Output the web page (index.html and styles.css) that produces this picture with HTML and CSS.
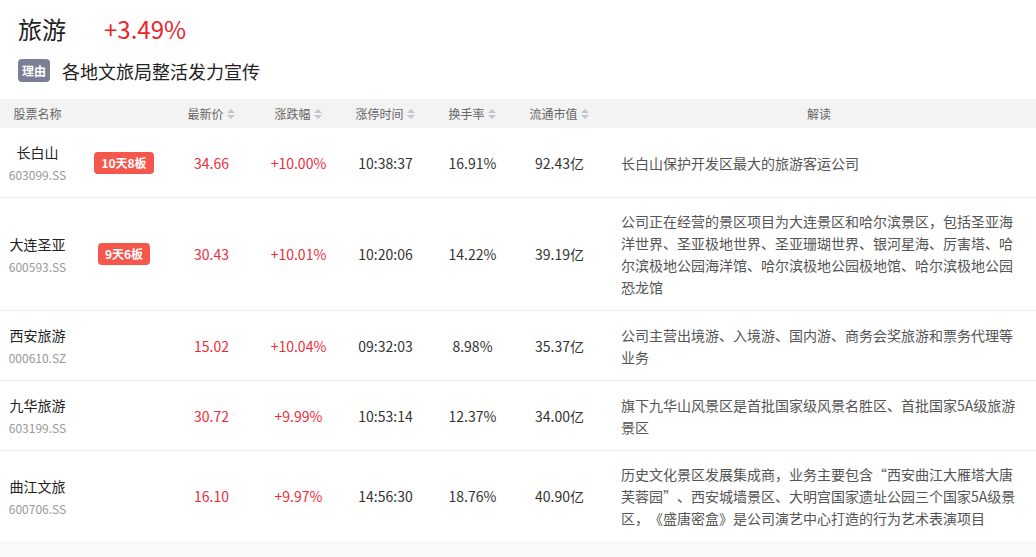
FILE: index.html
```html
<!DOCTYPE html>
<html lang="zh-CN">
<head>
  <meta charset="UTF-8" />
  <title>旅游板块</title>
  <link rel="stylesheet" href="styles.css">
</head>
<body>

  <div class="topic">
    <div class="topic-title">
      <span class="topic-name">旅游</span>
      <span class="topic-rate">+3.49%</span>
    </div>
    <div class="topic-reason">
      <span class="reason-tag">理由</span>
      <span class="reason-text">各地文旅局整活发力宣传</span>
    </div>
  </div>

  <div class="stock-table">
    <div class="row head">
      <div class="cell">股票名称</div>
      <div class="cell"></div>
      <div class="cell">最新价<svg class="sort" viewBox="0 0 10 12"><path d="M5 1 L9 5 L1 5 Z M5 11 L9 7 L1 7 Z"/></svg></div>
      <div class="cell">涨跌幅<svg class="sort" viewBox="0 0 10 12"><path d="M5 1 L9 5 L1 5 Z M5 11 L9 7 L1 7 Z"/></svg></div>
      <div class="cell">涨停时间<svg class="sort" viewBox="0 0 10 12"><path d="M5 1 L9 5 L1 5 Z M5 11 L9 7 L1 7 Z"/></svg></div>
      <div class="cell">换手率<svg class="sort" viewBox="0 0 10 12"><path d="M5 1 L9 5 L1 5 Z M5 11 L9 7 L1 7 Z"/></svg></div>
      <div class="cell">流通市值<svg class="sort" viewBox="0 0 10 12"><path d="M5 1 L9 5 L1 5 Z M5 11 L9 7 L1 7 Z"/></svg></div>
      <div class="cell desc">解读</div>
    </div>

    <div class="row">
      <div class="cell name"><div class="stock-name">长白山</div><div class="stock-code">603099.SS</div></div>
      <div class="cell tagcell"><span class="board-tag">10天8板</span></div>
      <div class="cell up">34.66</div>
      <div class="cell up">+10.00%</div>
      <div class="cell">10:38:37</div>
      <div class="cell">16.91%</div>
      <div class="cell">92.43亿</div>
      <div class="cell desc">长白山保护开发区最大的旅游客运公司</div>
    </div>

    <div class="row">
      <div class="cell name"><div class="stock-name">大连圣亚</div><div class="stock-code">600593.SS</div></div>
      <div class="cell tagcell"><span class="board-tag">9天6板</span></div>
      <div class="cell up">30.43</div>
      <div class="cell up">+10.01%</div>
      <div class="cell">10:20:06</div>
      <div class="cell">14.22%</div>
      <div class="cell">39.19亿</div>
      <div class="cell desc">公司正在经营的景区项目为大连景区和哈尔滨景区，包括圣亚海洋世界、圣亚极地世界、圣亚珊瑚世界、银河星海、厉害塔、哈尔滨极地公园海洋馆、哈尔滨极地公园极地馆、哈尔滨极地公园恐龙馆</div>
    </div>

    <div class="row">
      <div class="cell name"><div class="stock-name">西安旅游</div><div class="stock-code">000610.SZ</div></div>
      <div class="cell tagcell"></div>
      <div class="cell up">15.02</div>
      <div class="cell up">+10.04%</div>
      <div class="cell">09:32:03</div>
      <div class="cell">8.98%</div>
      <div class="cell">35.37亿</div>
      <div class="cell desc">公司主营出境游、入境游、国内游、商务会奖旅游和票务代理等业务</div>
    </div>

    <div class="row">
      <div class="cell name"><div class="stock-name">九华旅游</div><div class="stock-code">603199.SS</div></div>
      <div class="cell tagcell"></div>
      <div class="cell up">30.72</div>
      <div class="cell up">+9.99%</div>
      <div class="cell">10:53:14</div>
      <div class="cell">12.37%</div>
      <div class="cell">34.00亿</div>
      <div class="cell desc">旗下九华山风景区是首批国家级风景名胜区、首批国家5A级旅游景区</div>
    </div>

    <div class="row">
      <div class="cell name"><div class="stock-name">曲江文旅</div><div class="stock-code">600706.SS</div></div>
      <div class="cell tagcell"></div>
      <div class="cell up">16.10</div>
      <div class="cell up">+9.97%</div>
      <div class="cell">14:56:30</div>
      <div class="cell">18.76%</div>
      <div class="cell">40.90亿</div>
      <div class="cell desc">历史文化景区发展集成商，业务主要包含“西安曲江大雁塔大唐芙蓉园”、西安城墙景区、大明宫国家遗址公园三个国家5A级景区，《盛唐密盒》是公司演艺中心打造的行为艺术表演项目</div>
    </div>
  </div>

  <div class="footer"></div>

</body>
</html>
```

FILE: styles.css
```css
* { box-sizing: border-box; }
body {
  margin: 0;
  font-family: "Noto Sans CJK SC", "Noto Sans", sans-serif;
  background: #fff;
  color: #333;
}

.topic {
  padding: 12px 18px 17px;
}

.topic-title {
  display: flex;
  align-items: center;
  gap: 38px;
  height: 32px;
  font-size: 24px;
}

.topic-name {
  color: #222;
}

.topic-rate {
  color: #e8262b;
}

.topic-reason {
  display: flex;
  align-items: center;
  gap: 12px;
  margin-top: 15px;
  height: 23px;
}

.reason-tag {
  background: #7b8098;
  color: #fff;
  font-size: 12px;
  font-weight: bold;
  border-radius: 4px;
  width: 32px;
  height: 23px;
  line-height: 23px;
  text-align: center;
}

.reason-text {
  font-size: 18px;
  color: #222;
}

.row {
  display: grid;
  grid-template-columns: 75px 93px 87px 87px 87px 87px 87px 1fr;
  align-items: center;
  padding: 12px 0;
  border-bottom: 1px solid #ebebeb;
  font-size: 14px;
}

.row.head {
  background: #f3f3f3;
  padding: 0;
  height: 29px;
  border-bottom: none;
  font-size: 12px;
  color: #666;
}

.row:last-child {
  border-bottom: none;
}

.cell {
  text-align: center;
  display: flex;
  justify-content: center;
  align-items: center;
}

.sort {
  width: 10px;
  height: 12px;
  margin-left: 2px;
  fill: #c4c6cc;
}

.name {
  flex-direction: column;
}

.stock-name {
  font-size: 14px;
  line-height: 24px;
  color: #222;
}

.stock-code {
  font-size: 12px;
  line-height: 21px;
  color: #999;
}

.tagcell {
  padding-left: 5px;
}

.board-tag {
  background: #f5574d;
  color: #fff;
  font-size: 12px;
  font-weight: bold;
  border-radius: 4px;
  padding: 0 7px;
  height: 22px;
  line-height: 22px;
}

.up {
  color: #ec2d3a;
}

.desc {
  display: block;
  text-align: left;
  padding: 0 19px 0 18px;
  line-height: 22px;
  color: #555;
  text-spacing-trim: space-all;
}

.head .desc {
  text-align: center;
  color: #666;
}

.footer {
  background: #f8f9fb;
  height: 40px;
}
```
